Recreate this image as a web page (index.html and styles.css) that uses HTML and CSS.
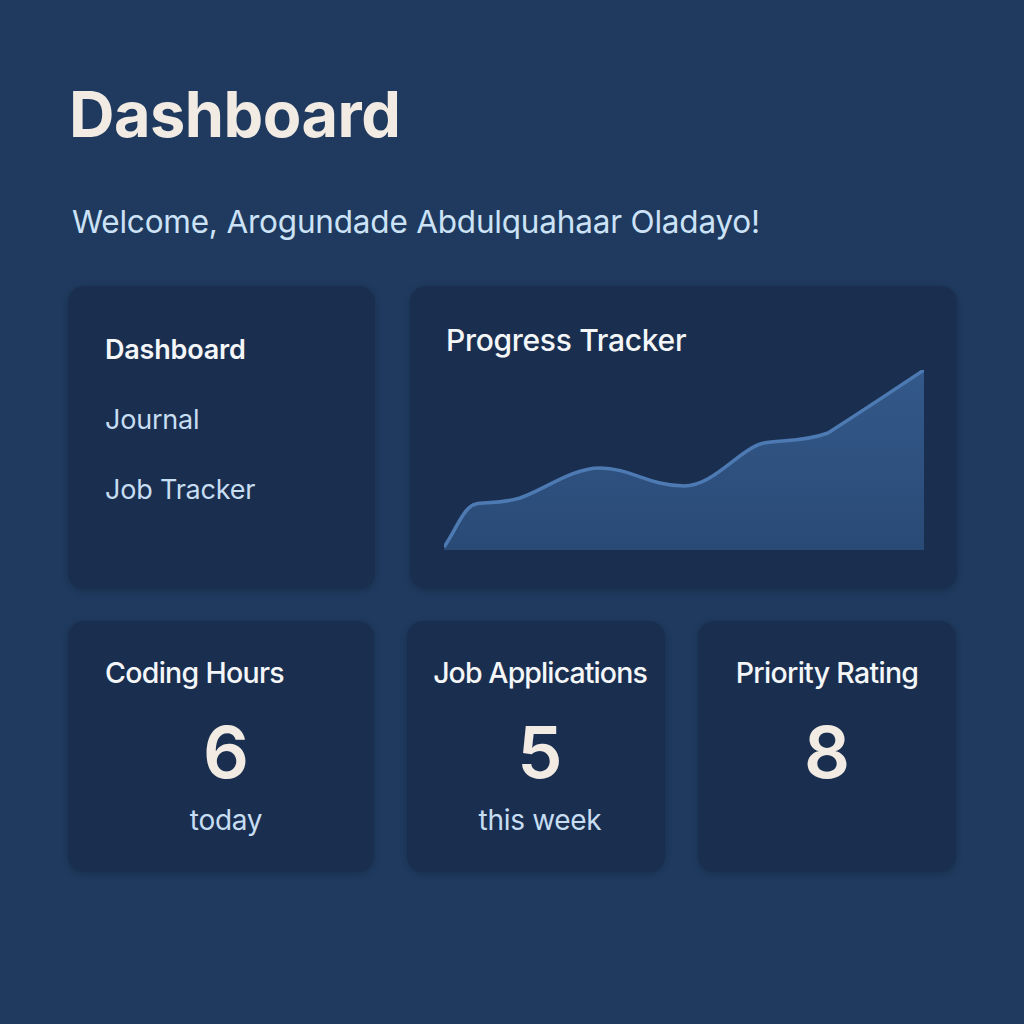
FILE: index.html
```html
<!DOCTYPE html>
<html lang="en">
<head>
<meta charset="utf-8">
<title>Dashboard</title>
<link rel="stylesheet" href="styles.css">
</head>
<body>
<main class="page">
  <h1 class="title">Dashboard</h1>
  <p class="welcome">Welcome, Arogundade Abdulquahaar Oladayo!</p>
  <section class="row row-top">
    <nav class="card nav-card">
      <a class="nav-link active">Dashboard</a>
      <a class="nav-link">Journal</a>
      <a class="nav-link">Job Tracker</a>
    </nav>
    <div class="card chart-card">
      <h2 class="chart-title">Progress Tracker</h2>
      <svg class="chart" viewBox="0 0 480 182" width="480" height="182">
        <defs>
          <linearGradient id="fill" x1="0" y1="0" x2="0" y2="1">
            <stop offset="0" stop-color="#33598a"/>
            <stop offset="1" stop-color="#2a4a76"/>
          </linearGradient>
        </defs>
        <path d="M0 177 C12 160 20 136 32 134 C40 132 56 134 76 128 C100 120 128 98 156 98 C186 98 206 116 240 116 C270 116 296 78 320 73 C336 70 360 72 384 63 C420 40 450 20 480 0 L480 180 L0 180 Z" fill="url(#fill)"/>
        <path d="M0 177 C12 160 20 136 32 134 C40 132 56 134 76 128 C100 120 128 98 156 98 C186 98 206 116 240 116 C270 116 296 78 320 73 C336 70 360 72 384 63 C420 40 450 20 480 0" fill="none" stroke="#4d7ab2" stroke-width="3.5"/>
      </svg>
    </div>
  </section>
  <section class="row row-bottom">
    <div class="card stat stat-left">
      <h3 class="stat-title">Coding Hours</h3>
      <div class="stat-value">6</div>
      <div class="stat-sub">today</div>
    </div>
    <div class="card stat stat-mid">
      <h3 class="stat-title">Job Applications</h3>
      <div class="stat-value">5</div>
      <div class="stat-sub">this week</div>
    </div>
    <div class="card stat">
      <h3 class="stat-title">Priority Rating</h3>
      <div class="stat-value">8</div>
    </div>
  </section>
</main>
</body>
</html>
```
FILE: styles.css
```css
* { box-sizing: border-box; }
html, body {
  margin: 0;
  padding: 0;
  background: #1f3a5e;
}
body {
  font-family: Inter, "Noto Sans", sans-serif;
  color: #f0ebe4;
  width: 1024px;
  height: 1024px;
  overflow: hidden;
}
.page {
  padding: 78px 67px 0 68px;
  display: flex;
  flex-direction: column;
}
.title {
  margin: 0 0 0 1px;
  font-size: 63px;
  line-height: 72px;
  font-weight: 700;
  color: #f1ebe3;
  letter-spacing: -0.5px;
}
.welcome {
  margin: 52px 0 0 4px;
  font-size: 31.5px;
  line-height: 40px;
  font-weight: 400;
  color: #cce2f6;
  letter-spacing: -0.2px;
}
.row {
  display: flex;
}
.row-top {
  margin-top: 44px;
  gap: 35px;
  height: 303px;
}
.row-bottom {
  margin-top: 32px;
  gap: 33px;
  height: 251px;
}
.card {
  background: #1a2f50;
  border-radius: 16px;
  box-shadow: 0 2px 6px rgba(10, 22, 40, 0.25);
}
.nav-card {
  width: 307px;
  padding: 46px 37px;
  display: flex;
  flex-direction: column;
  gap: 34px;
}
.nav-link {
  font-size: 27px;
  line-height: 36px;
  color: #c7ddf2;
  font-weight: 400;
  letter-spacing: -0.2px;
}
.nav-link.active {
  color: #f4f6f8;
  font-weight: 600;
}
.chart-card {
  flex: 1;
  padding: 36px 32px 0 34px;
  display: flex;
  flex-direction: column;
}
.chart-title {
  margin: 0 0 0 2px;
  font-size: 30px;
  line-height: 36px;
  font-weight: 500;
  color: #f4f6f8;
  letter-spacing: -0.3px;
}
.chart {
  display: block;
  margin-top: 12px;
  width: 480px;
  height: 182px;
}
.stat {
  width: 258px;
  padding: 34px 6px 0;
  display: flex;
  flex-direction: column;
  align-items: center;
}
.stat-left {
  width: 306px;
  padding-left: 37px;
  padding-right: 27px;
}
.stat-mid {
  padding-left: 12px;
  padding-right: 4px;
}
.stat-title {
  margin: 0;
  font-size: 28.5px;
  line-height: 36px;
  font-weight: 500;
  color: #f4f6f8;
  letter-spacing: -0.7px;
  white-space: nowrap;
}
.stat-mid .stat-title {
  letter-spacing: -0.9px;
}
.stat-left .stat-title {
  align-self: flex-start;
}
.stat-value {
  margin-top: 23px;
  font-size: 72px;
  line-height: 76px;
  font-weight: 600;
  color: #f1ebe3;
}
.stat-sub {
  margin-top: 12px;
  font-size: 28px;
  line-height: 36px;
  font-weight: 400;
  color: #c7ddf2;
  letter-spacing: -0.3px;
}
```
